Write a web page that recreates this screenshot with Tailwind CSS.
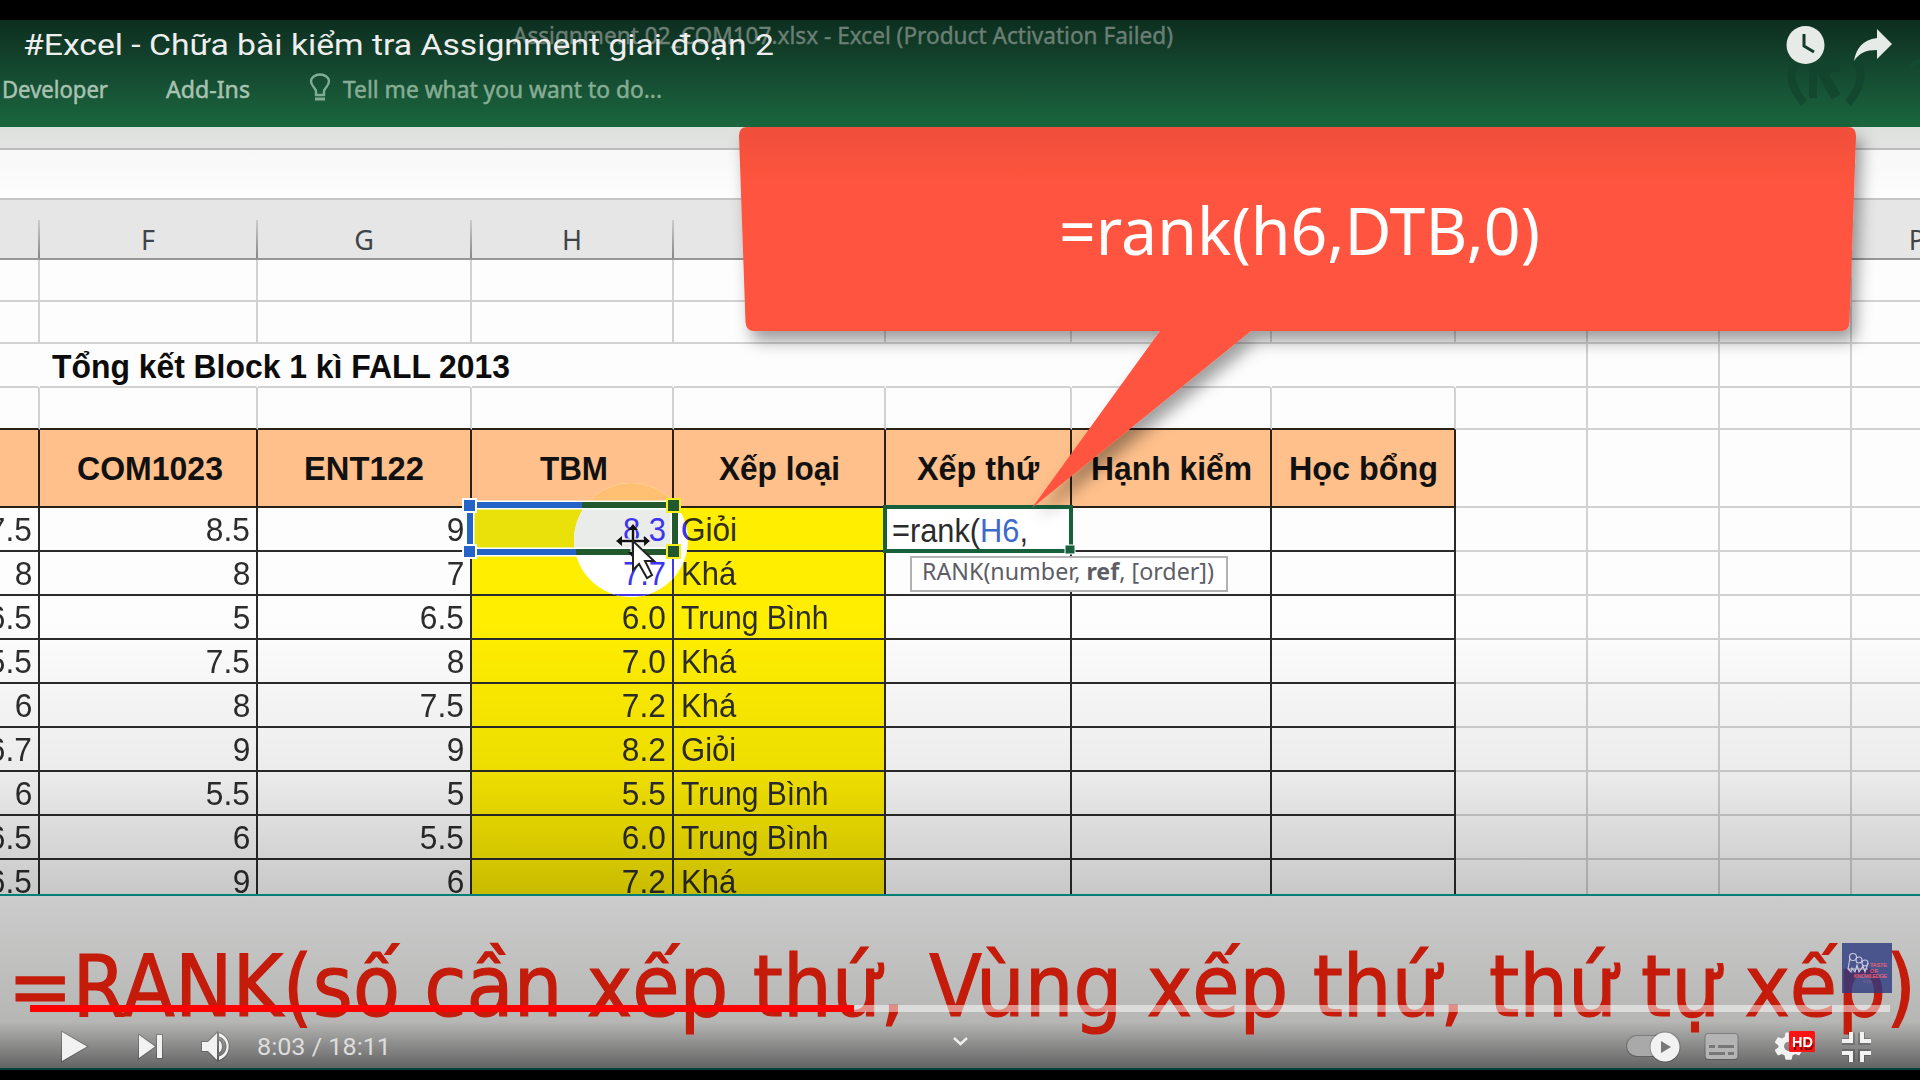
<!DOCTYPE html>
<html lang="vi">
<head>
<meta charset="utf-8">
<title>#Excel - Chữa bài kiểm tra Assignment giai đoạn 2</title>
<script src="https://cdn.jsdelivr.net/npm/@tailwindcss/browser@4"></script>
</head>
<body class="bg-black w-[1920px] h-[1080px] overflow-hidden">
<main class="relative w-[1920px] h-[1080px] pt-5 overflow-hidden font-['Liberation_Sans',sans-serif]">

  <!-- Video frame -->
  <section class="w-full h-[874px] overflow-hidden bg-[#fdfdfd]">
    <header class="h-[107px] bg-linear-to-b from-[#0d2e1f] via-[#154a31] to-[#1a673e] font-['Noto_Sans',sans-serif]">
      <div class="h-8 pl-[513px] flex items-center text-[23px] text-[#6b7f74] whitespace-nowrap"><svg class="h-8 w-[662px] overflow-visible"><text x="0" y="24" textLength="660" lengthAdjust="spacingAndGlyphs" fill="currentColor" stroke="currentColor" stroke-width=".4">Assignment 02_COM107.xlsx - Excel (Product Activation Failed)</text></svg></div>
      <div class="h-[75px] flex text-[24px] text-[#a8c2b2]">
        <svg class="w-[1920px] h-[75px]">
          <g stroke-width=".5">
          <text x="2" y="46" textLength="106" lengthAdjust="spacingAndGlyphs" fill="currentColor" stroke="currentColor">Developer</text>
          <text x="166" y="46" textLength="84" lengthAdjust="spacingAndGlyphs" fill="currentColor" stroke="currentColor">Add-Ins</text>
          <text x="343" y="46" textLength="319" lengthAdjust="spacingAndGlyphs" fill="#86ad93" stroke="#86ad93">Tell me what you want to do...</text>
          </g>
          <g fill="none" stroke="#7fae94" stroke-width="2.4"><path d="M316 43v-4c-1-4-5-5-5-10a9 6.500 0 0 1 18 0c0 5-4 6-5 10v4z"/><path stroke-width="3" d="M315 47h10"/></g>
          <g fill="none" stroke="#12432c" stroke-width="8" opacity=".7"><path d="M1804 51q-28-32 6-58M1848 51q28-32-6-58M1813 12v34"/><path stroke-width="10" d="M1838 12l-16 8 14 25M1816 15h24"/></g>
          <path d="M1920 10q-10 0-9 10" fill="none" stroke="#134a30" stroke-width="5"/>
        </svg>
      </div>
    </header>
    <div class="h-[23px] bg-linear-to-b from-[#dde2dd] to-[#e2e2e2] border-b-2 border-[#bcbcbc]"></div>
    <div class="h-[50px] bg-linear-to-b from-[#f8f8f8] to-[#fdfdfd] border-b-2 border-[#c4c6c6]"></div>
    <div id="heads" class="h-[60px] pt-5 bg-[#e6e6e6] border-b-2 border-[#979797] grid grid-cols-[40px_218px_214px_202px_212px_186px_200px_184px_132px_132px_132px_132px] text-[27px] leading-[40px] text-center text-[#404347] font-['Noto_Sans',sans-serif]"></div>
    <div id="sheet" class="grid grid-cols-[40px_218px_214px_202px_212px_186px_200px_184px_132px_132px_132px_132px] auto-rows-[44px] grid-rows-[42px_42px_44px_42px_78px]"></div>
  </section>

  <!-- Formula caption strip -->
  <section class="h-[176px] bg-linear-to-b from-[#cccccc] via-[#b6b6b5] via-73% to-[#646464] border-t-2 border-t-[#077f77] border-b-2 border-b-[#043f3c]">
    <svg class="block w-[1920px] h-[172px] font-['DejaVu_Sans_Condensed','DejaVu_Sans',sans-serif] text-[85px]"><text x="8" y="120" textLength="1908" lengthAdjust="spacingAndGlyphs" fill="#c41b0b" stroke="#c41b0b" stroke-width="1.2">=RANK(số cần xếp thứ, Vùng xếp thứ, thứ tự xếp)</text></svg>
  </section>

  <!-- Shade under the controls -->
  <div class="absolute left-0 top-[620px] w-full h-[274px] bg-linear-to-b from-black/0 via-black/7 via-56% to-black/21"></div>

  <!-- Selection, pointer, tooltip and callout lying over the sheet -->
  <svg class="absolute left-0 top-0 w-[1920px] h-[1080px] pointer-events-none" viewBox="0 0 1920 1080">
    <defs>
      <filter id="sh" x="-10%" y="-10%" width="120%" height="130%"><feDropShadow dx="6" dy="10" stdDeviation="8" flood-color="#000" flood-opacity=".38"/></filter>
      <clipPath id="spot"><circle cx="631" cy="540" r="57"/></clipPath>
      <linearGradient id="red" x1="0" y1="0" x2="0" y2="1"><stop offset="0" stop-color="#ef4f3b"/><stop offset=".15" stop-color="#ff543f"/></linearGradient>
    </defs>
    <g>
      <path d="M472 508h200v44H472z" fill="#ebe10a"/>
      <circle cx="631" cy="540" r="57" fill="#ffffff"/>
      <g clip-path="url(#spot)"><path d="M560 470h140v37H560z" fill="#ffc074"/><path d="M560 507h112v44H560z" fill="#e9ece9"/><path d="M560 595h130" stroke="#4038e8" stroke-width="2"/><path d="M673 552v45" stroke="#4038e8" stroke-width="2"/></g>
      <g font-family="Liberation Sans" font-size="33" fill="#3b35ef">
        <text x="623" y="541" textLength="43" lengthAdjust="spacingAndGlyphs">8.3</text>
        <text x="623" y="585" textLength="43" lengthAdjust="spacingAndGlyphs">7.7</text>
      </g>
      <text x="681" y="541" font-family="Liberation Sans" font-size="33" fill="#33301a" textLength="56" lengthAdjust="spacingAndGlyphs">Giỏi</text>
      <g clip-path="url(#spot)"><text x="681" y="541" font-family="Liberation Sans" font-size="33" fill="#3b35ef" textLength="56" lengthAdjust="spacingAndGlyphs" aria-hidden="true">Giỏi</text></g>
      <g stroke="#fff" stroke-width="9"><path d="M470 505H673M470 552H673M470 505V552M675 505V552"/></g>
      <path d="M472 505H582M472 552H576M470 505V552" stroke="#2463c8" stroke-width="6"/>
      <path d="M582 505H673M576 552H673M675 505V552" stroke="#22582d" stroke-width="6"/>
      <g stroke="#fff" stroke-width="2"><path fill="#2463c8" d="M463 499h13v13h-13zM463 545h13v13h-13z"/><path fill="#22582d" stroke="#f7ee20" d="M667 499h13v13h-13zM667 545h13v13h-13z"/></g>
      <path d="M617 541h32M633 526v28" stroke="#fff" stroke-width="5"/>
      <path d="M618 541h30M633 526v28" stroke="#111" stroke-width="2.500"/>
      <path d="M616 541l6-5v10zM650 541l-6-5v10zM633 524l-5 6h10zM633 558l-5-6h10z" fill="#111"/>
      <path d="M633 541v29l6-6 8 14 5-3-7-14h9z" fill="#fff" stroke="#222" stroke-width="2"/>
    </g>
    <path d="M885 507h186v44H885z" fill="#fff" stroke="#17603c" stroke-width="4"/>
    <path d="M1065 545h10v9h-10z" fill="#17603c" stroke="#fff"/>
    <text x="892" y="542" font-family="Liberation Sans" font-size="33" fill="#2b2b2b" textLength="136" lengthAdjust="spacingAndGlyphs">=rank(<tspan fill="#3c6bc9">H6</tspan>,</text>
    <path d="M911 557h316v34H911z" fill="#fff" stroke="#b2b2b2" stroke-width="2"/>
    <text x="922" y="580" font-family="Noto Sans" font-size="23" fill="#5d5d66" textLength="292" lengthAdjust="spacingAndGlyphs">RANK(number, <tspan font-weight="700">ref</tspan>, [order])</text>
    <path filter="url(#sh)" fill="url(#red)" d="M747 127H1848Q1856 127 1856 136L1849.500 322Q1849 331 1841 331H1251L1032 508L1160 331H754Q746 331 745.500 322L739 136Q739 127 747 127z"/>
    <text x="1059" y="255" font-family="Noto Sans" font-size="66" fill="#fff" textLength="481" lengthAdjust="spacingAndGlyphs">=rank(h6,DTB,0)</text>
  </svg>

  <!-- Player chrome -->
  <h1 class="absolute left-[23px] top-[24px] h-10 text-[30px] leading-10 text-[#eeeeee] whitespace-nowrap font-['Roboto',sans-serif]"><svg class="h-10 w-[760px] overflow-visible"><text x="0" y="31" textLength="751" lengthAdjust="spacingAndGlyphs" fill="currentColor">#Excel - Chữa bài kiểm tra Assignment giai đoạn 2</text></svg></h1>
  <svg class="absolute left-[1780px] top-[20px] w-[120px] h-12" viewBox="1780 20 120 48">
    <circle cx="1805.500" cy="45" r="19" fill="#e7ebe8"/><path d="M1804 34v12l10 6" fill="none" stroke="#12382a" stroke-width="3"/>
    <path d="M1877 29l15 15-15 15v-9c-11 0-18 3-23 11 2-12 8-21 23-23z" fill="#e7ebe8"/>
  </svg>

  <div class="absolute left-[1842px] top-[943px] w-[50px] h-[50px] bg-[#2c3a80]/80 overflow-hidden">
    <svg class="w-[50px] h-[50px]" viewBox="0 0 50 50">
      <g fill="none" stroke="#c9cbe0" stroke-width="1.100"><circle cx="11" cy="14" r="3.500"/><circle cx="17" cy="17" r="3"/><circle cx="23" cy="20" r="3"/><path d="M8 15l-2 11 3 3 1-4 3 4 2-7 2 7 4-6 2 6 3-9M6 26h20"/></g>
      <g fill="#e0607a" stroke="#e0607a" stroke-width=".2" font-family="Liberation Sans" font-size="5.500"><text x="28" y="24" textLength="17">TASTE</text><text x="28" y="29.500" textLength="8">OF</text><text x="12" y="35" textLength="33">KNOWLEDGE</text></g>
      <text x="21" y="40" font-family="Liberation Sans" font-size="3" fill="#9a6a90">VLOG</text>
    </svg>
  </div>

  <div class="absolute left-[30px] top-[1005px] w-[1860px] h-[7px] bg-white/50"><div class="h-full bg-[#ff0000]" style="width:44.3%"></div></div>

  <svg class="absolute left-0 top-[1020px] w-[1920px] h-12" viewBox="0 1020 1920 48">
    <g fill="#f2f2f2" stroke="#000" stroke-opacity=".2" stroke-width="2" paint-order="stroke">
      <path d="M62 1032v29l25-14.500z"/>
      <path d="M139 1035v23l16-11.500zM157 1035h5v23h-5z"/>
      <path d="M202 1042v9h6l9 9v-27l-9 9zM219 1040.500c4 2 4 10 0 12zM219 1033v3.500c10 3 10 17 0 20v3.500c13-4 13-23 0-27z"/>
      <text x="257" y="1055" font-family="Roboto" font-size="24.500" fill="#dddddd" stroke="none" textLength="134" lengthAdjust="spacingAndGlyphs">8:03 / 18:11</text>
      <rect x="1627" y="1036" width="50" height="20" rx="10" fill="#a9a9a9"/>
      <circle cx="1665" cy="1047" r="14.500"/>
      <path d="M1661 1041v12l10-6z" fill="#777" stroke="none"/>
      <rect x="1705.500" y="1034" width="32" height="25" rx="3" fill="#b4b4b4"/>
      <path d="M1709 1045h6v3h-6zM1718 1045h16v3h-16zM1709 1052h16v3h-16zM1728 1052h6v3h-6z" fill="#777" stroke="none"/>
    </g>
    <path d="M954 1038l6.500 6 6.500-6" fill="none" stroke="#eee" stroke-width="2.500"/>
    <g fill="none" stroke="#000" stroke-opacity=".2" stroke-width="7"><path d="M1842 1041.500h9.500v-9M1870.500 1041.500h-9v-9M1842 1052.500h9.500v9M1870.500 1052.500h-9v9"/></g>
    <g fill="none" stroke="#f2f2f2" stroke-width="4"><path d="M1842 1041h9v-9M1871 1041h-9v-9M1842 1053h9v9M1871 1053h-9v9"/></g>
    <path fill="#f2f2f2" fill-rule="evenodd" transform="translate(1774.500 1028) scale(1.020)" d="M23.940 18.780c.03-.25.05-.51.05-.78s-.02-.53-.05-.78l3.200-2.480c.29-.22.370-.62.180-.94l-2.800-4.500c-.18-.33-.6-.46-.93-.33l-3.300 1.480c-.8-.6-1.680-1.100-2.620-1.470L17 5c-.06-.36-.38-.63-.76-.63h-4.800c-.38 0-.69.27-.75.630L10 8.900c-.94.400-1.800.900-2.600 1.500L4 9c-.34-.13-.74 0-.93.330L.500 13.500c-.18.320-.11.720.18.940L3.900 17.200a12 12 0 0 0 0 1.600L.680 21.300c-.29.220-.37.620-.18.940l2.500 4.200c.18.330.6.460.93.330l3.400-1.400c.8.600 1.670 1.100 2.600 1.500l.7 3.600c.06.370.37.630.75.630h4.800c.38 0 .7-.26.760-.63l.7-3.600c.94-.4 1.800-.9 2.600-1.500l3.400 1.400c.34.130.75 0 .93-.33l2.500-4.200c.18-.32.1-.72-.18-.94zM13.840 22.500a4.500 4.500 0 1 1 0-9 4.500 4.500 0 0 1 0 9z"/>
    <rect x="1789" y="1031" width="26" height="21" rx="1.500" fill="#fa1414"/>
    <text x="1792" y="1047" font-family="Liberation Sans" font-weight="700" font-size="14.500" fill="#fff" class="drop-shadow-[1px_3px_0_#8c0505]">HD</text>
  </svg>
</main>

<script>
  const heads = ['', 'F', 'G', 'H', '', '', '', '', '', '', '', 'P'];
  document.getElementById('heads').innerHTML = heads.map(h =>
    `<div class="relative"><span class="relative -left-px">${h}</span><i class="absolute right-0 top-0 w-[2px] h-[38px] bg-linear-to-b from-[#cccccc] to-[#888888]"></i></div>`).join('');

  const titles = ['', 'COM1023', 'ENT122', 'TBM', 'Xếp loại', 'Xếp thứ', 'Hạnh kiểm', 'Học bổng'];
  const titleWidth = [0, 146, 120, 68, 121, 122, 161, 149];
  const data = [
    ['7.5', '8.5', '9', '', ''],
    ['8', '8', '7', '', 'Khá'],
    ['6.5', '5', '6.5', '6.0', 'Trung Bình'],
    ['5.5', '7.5', '8', '7.0', 'Khá'],
    ['6', '8', '7.5', '7.2', 'Khá'],
    ['6.7', '9', '9', '8.2', 'Giỏi'],
    ['6', '5.5', '5', '5.5', 'Trung Bình'],
    ['6.5', '6', '5.5', '6.0', 'Trung Bình'],
    ['6.5', '9', '6', '7.2', 'Khá'],
  ];
  let html = '';
  for (let r = 0; r < 4; r++) for (let c = 0; c < 12; c++) {
    const below = r === 3 && c < 8 ? 'border-b-[#2a211b]' : 'border-b-[#d2d2d2]';
    const side = r === 2 && c < 8 ? 'border-r-transparent' : 'border-r-[#d2d2d2]';
    const text = r === 2 && c === 1 ? '<svg class="block w-[470px] h-[42px] overflow-visible text-[33px] font-bold"><text x="12" y="33.500" textLength="458" lengthAdjust="spacingAndGlyphs" fill="#0c0c0c">Tổng kết Block 1 kì FALL 2013</text></svg>' : '';
    html += `<div class="border-b-2 border-r-2 ${below} ${side}">${text}</div>`;
  }
  for (let c = 0; c < 12; c++) {
    html += c < 8
      ? `<div class="flex items-center justify-center bg-[#ffc08b] border-b-2 border-r-2 border-[#2a211b] text-[33px] font-bold text-[#111111]">${titles[c] ? `<svg class="h-[50px] overflow-visible" width="${titleWidth[c]}"><text x="${c === 1 || c === 3 ? 2 : 0}" y="37" textLength="${titleWidth[c]}" lengthAdjust="spacingAndGlyphs" fill="currentColor">${titles[c]}</text></svg>` : ''}</div>`
      : '<div class="border-b-2 border-r-2 border-[#d2d2d2]"></div>';
  }
  for (const row of data) for (let c = 0; c < 12; c++) {
    const fill = c === 3 || c === 4 ? 'bg-[#ffee00]' : '';
    const line = c < 8 ? 'border-[#2b2b2b]' : 'border-[#d2d2d2]';
    const side = c === 4 ? 'justify-start pl-[7px]' : 'justify-end pr-[6px]';
    const squeeze = (row[c] || '').length > 6 ? 'origin-left scale-x-[0.91]' : c === 4 ? 'origin-left scale-x-[0.94]' : 'origin-right scale-x-[0.96]';
    html += `<div class="flex items-center ${side} ${fill} border-b-2 border-r-2 ${line} text-[33px] leading-[42px] text-[#2d2d2d] whitespace-nowrap overflow-hidden"><span class="relative top-px ${squeeze}">${row[c] || ''}</span></div>`;
  }
  document.getElementById('sheet').innerHTML = html;
</script>
</body>
</html>
